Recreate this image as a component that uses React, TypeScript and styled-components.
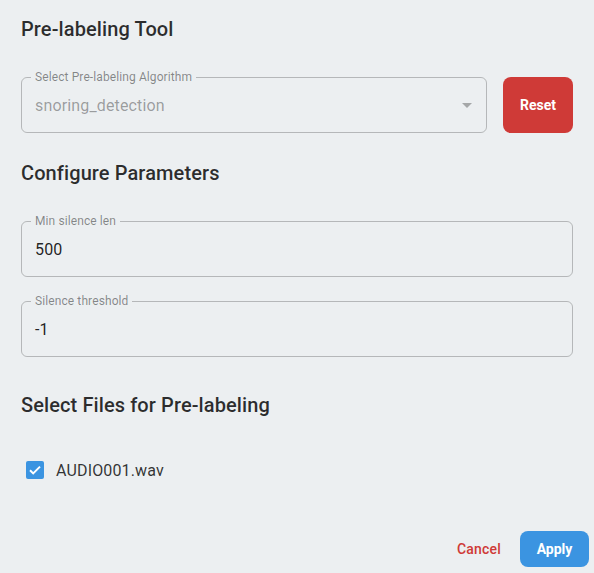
import styled, { createGlobalStyle } from 'styled-components'

const GlobalStyle = createGlobalStyle`
  html, body {
    margin: 0;
    background: #eceff1;
    font-family: Roboto, "Noto Sans", "Liberation Sans", sans-serif;
  }
`

const BLUE = '#3b94e1'
const RED = '#cf3a37'

export default function App() {
  return (
    <>
      <GlobalStyle />
      <Page>
        <Content>
          <SectionTitle>Pre-labeling Tool</SectionTitle>
          <AlgorithmRow>
            <Field disabled>
              <FieldLabel>Select Pre-labeling Algorithm</FieldLabel>
              <FieldValue>snoring_detection</FieldValue>
              <Caret viewBox="0 0 24 24">
                <path d="M7 10l5 5 5-5z" />
              </Caret>
            </Field>
            <ResetButton>Reset</ResetButton>
          </AlgorithmRow>

          <SectionTitle $top={24}>Configure Parameters</SectionTitle>
          <Params>
            <Field>
              <FieldLabel>Min silence len</FieldLabel>
              <FieldValue>500</FieldValue>
            </Field>
            <Field>
              <FieldLabel>Silence threshold</FieldLabel>
              <FieldValue>-1</FieldValue>
            </Field>
          </Params>

          <SectionTitle $top={32}>Select Files for Pre-labeling</SectionTitle>
          <FileRow>
            <CheckBox>
              <svg viewBox="0 0 18 18" width="18" height="18">
                <path d="M4 9.2l3.2 3.2L14 5.6" fill="none" stroke="#fff" strokeWidth="2" />
              </svg>
            </CheckBox>
            <FileName>AUDIO001.wav</FileName>
          </FileRow>
        </Content>

        <Actions>
          <CancelButton>Cancel</CancelButton>
          <ApplyButton>Apply</ApplyButton>
        </Actions>
      </Page>
    </>
  )
}

const Page = styled.div`
  width: 594px;
  height: 573px;
  display: flex;
  flex-direction: column;
  box-sizing: border-box;
`

const Content = styled.div`
  padding: 13px 21px 0 21px;
  display: flex;
  flex-direction: column;
`

const SectionTitle = styled.h2<{ $top?: number }>`
  margin: ${({ $top }) => $top ?? 0}px 0 0 0;
  font-size: 20px;
  font-weight: 500;
  line-height: 32px;
  color: rgba(0, 0, 0, 0.82);
  letter-spacing: 0.1px;
`

const AlgorithmRow = styled.div`
  margin-top: 32px;
  display: flex;
  gap: 16px;
`

const Params = styled.div`
  margin-top: 32px;
  display: flex;
  flex-direction: column;
  gap: 24px;
`

const Field = styled.div<{ disabled?: boolean }>`
  position: relative;
  flex: 1 1 auto;
  min-width: 0;
  height: 56px;
  box-sizing: border-box;
  border: 1px solid rgba(0, 0, 0, 0.23);
  border-radius: 6px;
  display: flex;
  align-items: center;
  padding: 0 13px;
  color: ${({ disabled }) => (disabled ? 'rgba(0, 0, 0, 0.36)' : 'rgba(0, 0, 0, 0.87)')};
`

const FieldLabel = styled.span`
  position: absolute;
  top: -8px;
  left: 9px;
  padding: 0 4px;
  background: #eceff1;
  font-size: 12px;
  line-height: 14px;
  letter-spacing: 0.1px;
  color: rgba(0, 0, 0, 0.45);
`

const FieldValue = styled.span`
  font-size: 16px;
  line-height: 23px;
  letter-spacing: 0.15px;
  margin-top: 1px;
`

const Caret = styled.svg`
  position: absolute;
  right: 7px;
  top: 15px;
  width: 24px;
  height: 24px;
  fill: rgba(0, 0, 0, 0.3);
`

const ResetButton = styled.button`
  width: 70px;
  height: 56px;
  border: none;
  border-radius: 8px;
  background: ${RED};
  color: #fff;
  font-family: inherit;
  font-size: 14px;
  font-weight: 700;
  cursor: pointer;
`

const FileRow = styled.label`
  margin-top: 28px;
  display: flex;
  align-items: center;
  gap: 12px;
  padding-left: 5px;
  height: 42px;
`

const CheckBox = styled.span`
  width: 18px;
  height: 18px;
  border-radius: 2px;
  background: ${BLUE};
  display: flex;
  align-items: center;
  justify-content: center;
`

const FileName = styled.span`
  font-size: 16px;
  color: rgba(0, 0, 0, 0.8);
  letter-spacing: 0.15px;
`

const Actions = styled.div`
  margin-top: auto;
  display: flex;
  justify-content: flex-end;
  align-items: center;
  gap: 10px;
  padding: 0 5px 6px 0;
`

const CancelButton = styled.button`
  border: none;
  background: none;
  padding: 8px 9px;
  color: ${RED};
  font-family: inherit;
  font-size: 14px;
  font-weight: 500;
  letter-spacing: 0.2px;
  cursor: pointer;
`

const ApplyButton = styled.button`
  width: 69px;
  height: 36px;
  border: none;
  border-radius: 8px;
  background: ${BLUE};
  color: #fff;
  font-family: inherit;
  font-size: 14px;
  font-weight: 700;
  cursor: pointer;
`
